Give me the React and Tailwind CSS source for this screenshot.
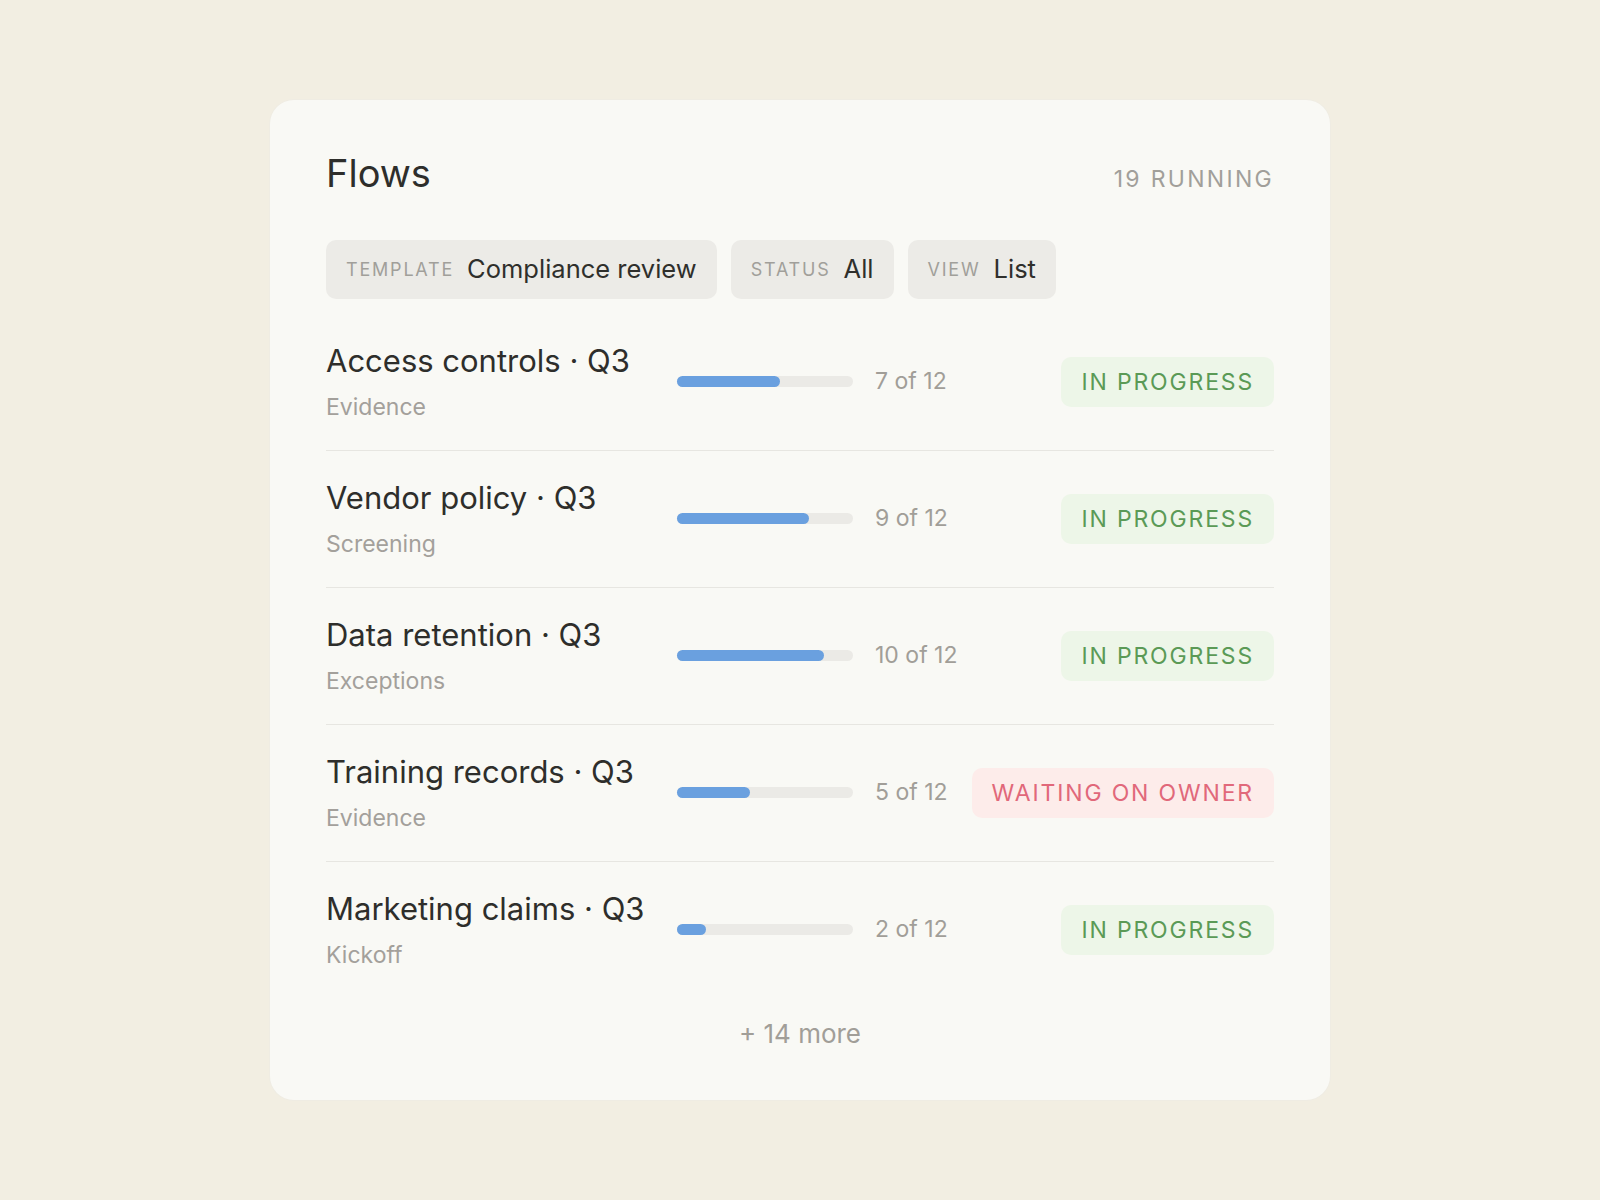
import React from "react";

const rows = [
  { title: "Access controls · Q3", sub: "Evidence", done: 7, status: "progress" },
  { title: "Vendor policy · Q3", sub: "Screening", done: 9, status: "progress" },
  { title: "Data retention · Q3", sub: "Exceptions", done: 10, status: "progress" },
  { title: "Training records · Q3", sub: "Evidence", done: 5, status: "waiting" },
  { title: "Marketing claims · Q3", sub: "Kickoff", done: 2, status: "progress" },
];

function Chip({ label, value }) {
  return (
    <div className="flex h-[59px] items-center gap-[13px] rounded-[10px] bg-[#ecebe7] px-5">
      <span className="text-[18px] uppercase tracking-[0.1em] text-[#a19f9a]">{label}</span>
      <span className="text-[25.5px] text-[#2f2f2c]">{value}</span>
    </div>
  );
}

function Badge({ status }) {
  if (status === "waiting") {
    return (
      <div className="rounded-[10px] bg-[#fdecea] px-5 py-3 text-[23px] leading-[26px] tracking-[0.08em] text-[#e1687a]">
        WAITING ON OWNER
      </div>
    );
  }
  return (
    <div className="rounded-[10px] bg-[#edf6e8] px-5 py-3 text-[23px] leading-[26px] tracking-[0.08em] text-[#5b9a56]">
      IN PROGRESS
    </div>
  );
}

export default function App() {
  return (
    <div
      className="flex min-h-[1200px] w-full items-center justify-center bg-[#f2eee2]"
      style={{ fontFamily: "Inter, 'Noto Sans', sans-serif" }}
    >
      <div className="w-[1060px] h-[1000px] rounded-[24px] bg-[#f9f9f5] px-14 pt-[50px] shadow-[0_0_0_1px_#efece3]">
        <div className="flex items-baseline justify-between">
          <h1 className="text-[38px] leading-[46px] text-[#2e2e2b]">Flows</h1>
          <span className="text-[23px] tracking-[0.1em] text-[#a19f9a]">19 RUNNING</span>
        </div>
        <div className="mt-[43px] flex gap-[14px]">
          <Chip label="Template" value="Compliance review" />
          <Chip label="Status" value="All" />
          <Chip label="View" value="List" />
        </div>
        <div className="mt-[15px]">
          {rows.map((r, i) => (
            <div
              key={i}
              className={
                "flex items-center py-[29px] " +
                (i < rows.length - 1 ? "border-b border-[#e7e6e1]" : "")
              }
            >
              <div className="w-[351px]">
                <div className="text-[31px] leading-[36px] text-[#2e2e2b]">{r.title}</div>
                <div className="mt-[14px] text-[23px] leading-[28px] text-[#a3a09b]">{r.sub}</div>
              </div>
              <div className="h-[11px] w-[176px] rounded-full bg-[#ebeae6]">
                <div
                  className="h-full rounded-full bg-[#6aa0df]"
                  style={{ width: `${(r.done / 12) * 100}%` }}
                />
              </div>
              <div className="ml-[22px] text-[23px] text-[#a19e98]">{r.done} of 12</div>
              <div className="ml-auto">
                <Badge status={r.status} />
              </div>
            </div>
          ))}
        </div>
        <div className="mt-5 text-center text-[26px] leading-[32px] text-[#a19e98]">+ 14 more</div>
      </div>
    </div>
  );
}
